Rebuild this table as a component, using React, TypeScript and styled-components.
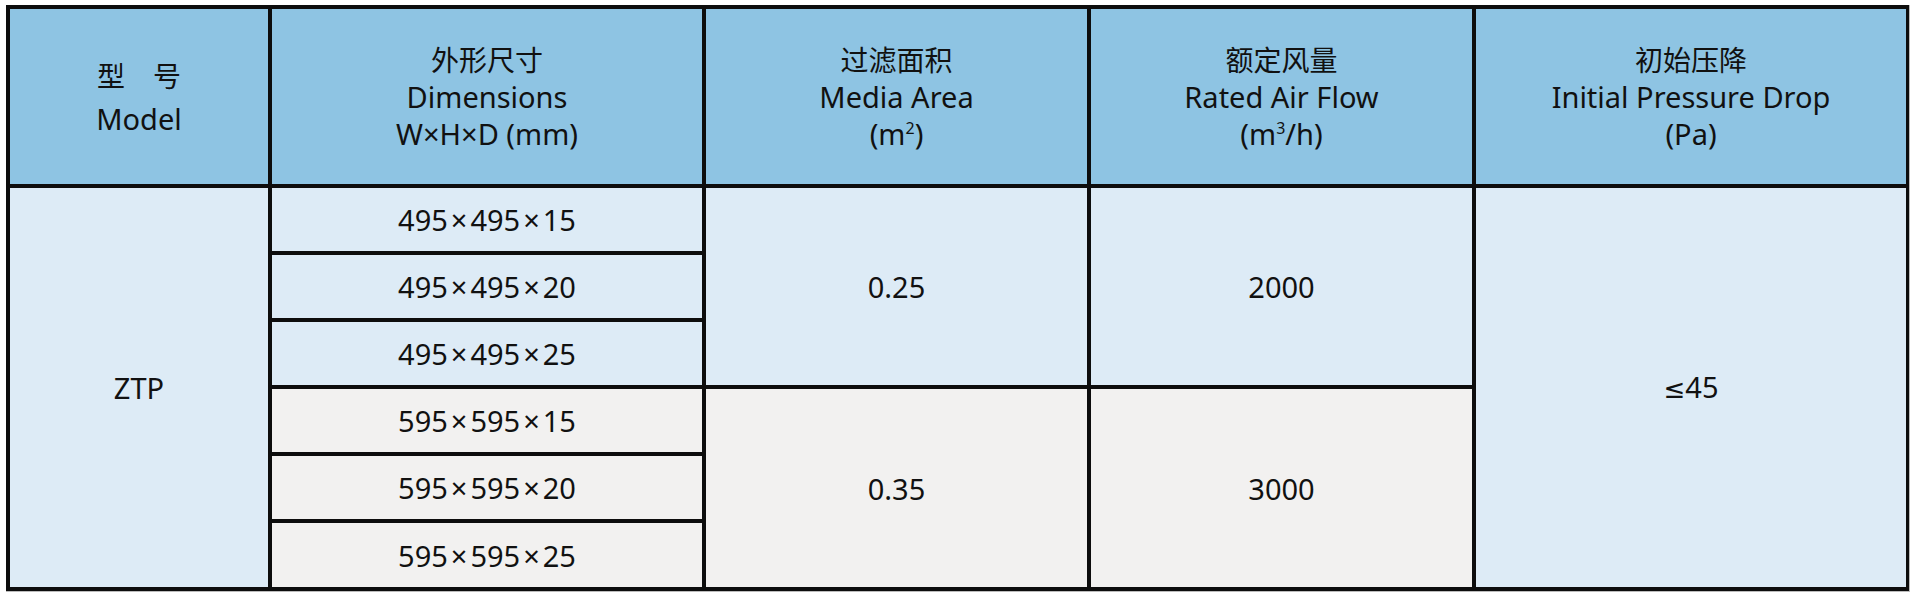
import React from 'react';
import styled, { createGlobalStyle } from 'styled-components';

const GlobalStyle = createGlobalStyle`
  html, body {
    margin: 0;
    padding: 0;
    background: #ffffff;
  }
  body {
    font-family: "Noto Sans", "Noto Sans CJK SC", sans-serif;
    color: #111;
  }
`;

const Page = styled.div`
  padding: 5px 0 0 6px;
`;

const SpecGrid = styled.div`
  display: grid;
  width: 1904px;
  box-sizing: border-box;
  grid-template-columns: 258px 430px 381px 381px 430px;
  grid-template-rows: 175px repeat(5, 63px) 64px;
  gap: 4px;
  padding: 4px;
  background: #0d0d0d;
  border-right: 1px solid #bcbcbc;
  border-bottom: 1px solid #bcbcbc;
`;

type Tone = 'head' | 'blue' | 'grey';

const toneColor: Record<Tone, string> = {
  head: '#8ec4e3',
  blue: '#ddebf6',
  grey: '#f2f1f0',
};

const Cell = styled.div<{ $tone: Tone; $col: number; $row: string; $lh?: number }>`
  grid-column: ${({ $col }) => $col};
  grid-row: ${({ $row }) => $row};
  background: ${({ $tone }) => toneColor[$tone]};
  display: flex;
  flex-direction: column;
  align-items: center;
  justify-content: center;
  text-align: center;
  font-size: 29px;
  line-height: ${({ $lh }) => $lh ?? 37}px;
  color: #111;
`;

const Cn = styled.span`
  font-family: "Noto Sans CJK SC", sans-serif;
  font-size: 28px;
`;

const Sup = styled.sup`
  font-size: 16px;
  line-height: 0;
  vertical-align: 11px;
`;

const Times = styled.span`
  margin: 0 3px;
`;

const Le = styled.span`
  font-family: "DejaVu Sans", sans-serif;
  font-size: 26px;
`;

const sizes: { dims: string[]; tone: Tone }[] = [
  { dims: ['495', '495', '15'], tone: 'blue' },
  { dims: ['495', '495', '20'], tone: 'blue' },
  { dims: ['495', '495', '25'], tone: 'blue' },
  { dims: ['595', '595', '15'], tone: 'grey' },
  { dims: ['595', '595', '20'], tone: 'grey' },
  { dims: ['595', '595', '25'], tone: 'grey' },
];

export default function App() {
  return (
    <>
      <GlobalStyle />
      <Page>
        <SpecGrid>
          <Cell $tone="head" $col={1} $row="1" $lh={43}>
            <Cn>型　号</Cn>
            <span>Model</span>
          </Cell>
          <Cell $tone="head" $col={2} $row="1">
            <Cn>外形尺寸</Cn>
            <span>Dimensions</span>
            <span>W×H×D (mm)</span>
          </Cell>
          <Cell $tone="head" $col={3} $row="1">
            <Cn>过滤面积</Cn>
            <span>Media Area</span>
            <span>(m<Sup>2</Sup>)</span>
          </Cell>
          <Cell $tone="head" $col={4} $row="1">
            <Cn>额定风量</Cn>
            <span>Rated Air Flow</span>
            <span>(m<Sup>3</Sup>/h)</span>
          </Cell>
          <Cell $tone="head" $col={5} $row="1">
            <Cn>初始压降</Cn>
            <span>Initial Pressure Drop</span>
            <span>(Pa)</span>
          </Cell>

          <Cell $tone="blue" $col={1} $row="2 / span 6">ZTP</Cell>
          {sizes.map((s, i) => (
            <Cell key={s.dims.join('x')} $tone={s.tone} $col={2} $row={String(i + 2)}>
              <span>
                {s.dims[0]}
                <Times>×</Times>
                {s.dims[1]}
                <Times>×</Times>
                {s.dims[2]}
              </span>
            </Cell>
          ))}
          <Cell $tone="blue" $col={3} $row="2 / span 3">0.25</Cell>
          <Cell $tone="blue" $col={4} $row="2 / span 3">2000</Cell>
          <Cell $tone="grey" $col={3} $row="5 / span 3">0.35</Cell>
          <Cell $tone="grey" $col={4} $row="5 / span 3">3000</Cell>
          <Cell $tone="blue" $col={5} $row="2 / span 6">
            <span>
              <Le>≤</Le>45
            </span>
          </Cell>
        </SpecGrid>
      </Page>
    </>
  );
}
